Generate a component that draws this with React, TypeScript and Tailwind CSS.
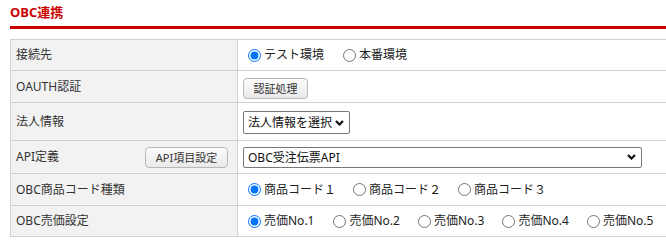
import React from "react";

const font = "font-['Noto_Sans','Noto_Sans_CJK_JP',sans-serif]";

function Chevron() {
  return (
    <svg width="9" height="6" viewBox="0 0 9 6" className="pointer-events-none absolute right-[6px] top-1/2 -translate-y-1/2">
      <path d="M1 1 L4.5 4.5 L8 1" fill="none" stroke="#111" strokeWidth="2.2" />
    </svg>
  );
}

function Radio({ name, label, checked }: { name: string; label: string; checked?: boolean }) {
  return (
    <label className="mr-[6px] inline-flex items-center whitespace-nowrap text-[12px] leading-[16px] text-[#222]">
      <input type="radio" name={name} defaultChecked={checked} className="ml-[5px] mr-[3px] h-[13px] w-[13px]" />
      <span>{label}</span>
    </label>
  );
}

function Btn({ children, w }: { children: React.ReactNode; w: string }) {
  return (
    <button
      className={`${w} h-[21px] rounded-[4px] border border-[#b8b8b8] bg-gradient-to-b from-[#fbfbfb] to-[#e9e9e9] text-[11px] leading-[19px] text-[#333]`}
    >
      {children}
    </button>
  );
}

export default function App() {
  const th = "border border-[#d0d0d0] bg-[#f2f2f2] pl-[5px] text-left align-middle font-normal text-[12px] text-[#333]";
  const td = "border border-[#d0d0d0] bg-white pl-[5px] align-middle";
  return (
    <div className={`h-[245px] w-full overflow-hidden bg-white ${font}`}>
      <div className="w-[700px] pl-[10px]">
        <h2 className="h-[26px] pt-[4px] text-[13px] font-bold leading-[16px] text-[#cc0000]">OBC連携</h2>
        <div className="h-[3px] bg-[#cc0000]" />
        <table className="mt-[10px] w-[670px] table-fixed border-collapse">
          <colgroup>
            <col className="w-[227px]" />
            <col />
          </colgroup>
          <tbody>
            <tr className="h-[31px]">
              <th className={th}>接続先</th>
              <td className={td}>
                <div className="flex items-center">
                  <Radio name="env" label="テスト環境" checked />
                  <span className="w-[8px]" />
                  <Radio name="env" label="本番環境" />
                </div>
              </td>
            </tr>
            <tr className="h-[32px]">
              <th className={th}>OAUTH認証</th>
              <td className={td}>
                <Btn w="w-[65px]">認証処理</Btn>
              </td>
            </tr>
            <tr className="h-[38px]">
              <th className={th}>法人情報</th>
              <td className={td}>
                <div className="relative inline-block">
                  <select className="block h-[23px] w-[107px] appearance-none rounded-[2px] border border-[#767676] bg-white pl-[4px] text-[12px] leading-[20px] text-[#111]">
                    <option>法人情報を選択</option>
                  </select>
                  <Chevron />
                </div>
              </td>
            </tr>
            <tr className="h-[33px]">
              <th className={th}>
                <div className="flex items-center">
                  <span>API定義</span>
                  <span className="ml-auto mr-[9px]">
                    <Btn w="w-[83px]">API項目設定</Btn>
                  </span>
                </div>
              </th>
              <td className={td}>
                <div className="relative w-[399px]">
                  <select className="block h-[21px] w-[399px] appearance-none rounded-[2px] border border-[#767676] bg-white pl-[4px] text-[12px] leading-[19px] text-[#111]">
                    <option>OBC受注伝票API</option>
                  </select>
                  <Chevron />
                </div>
              </td>
            </tr>
            <tr className="h-[32px]">
              <th className={th}>OBC商品コード種類</th>
              <td className={td}>
                <div className="flex items-center">
                  <Radio name="code" label="商品コード１" checked />
                  <span className="w-[6px]" />
                  <Radio name="code" label="商品コード２" />
                  <span className="w-[6px]" />
                  <Radio name="code" label="商品コード３" />
                </div>
              </td>
            </tr>
            <tr className="h-[31px]">
              <th className={th}>OBC売価設定</th>
              <td className={td}>
                <div className="flex items-center">
                  <Radio name="price" label="売価No.1" checked />
                  <span className="w-[8px]" />
                  <Radio name="price" label="売価No.2" />
                  <span className="w-[7px]" />
                  <Radio name="price" label="売価No.3" />
                  <span className="w-[7px]" />
                  <Radio name="price" label="売価No.4" />
                  <span className="w-[7px]" />
                  <Radio name="price" label="売価No.5" />
                </div>
              </td>
            </tr>
          </tbody>
        </table>
      </div>
    </div>
  );
}
